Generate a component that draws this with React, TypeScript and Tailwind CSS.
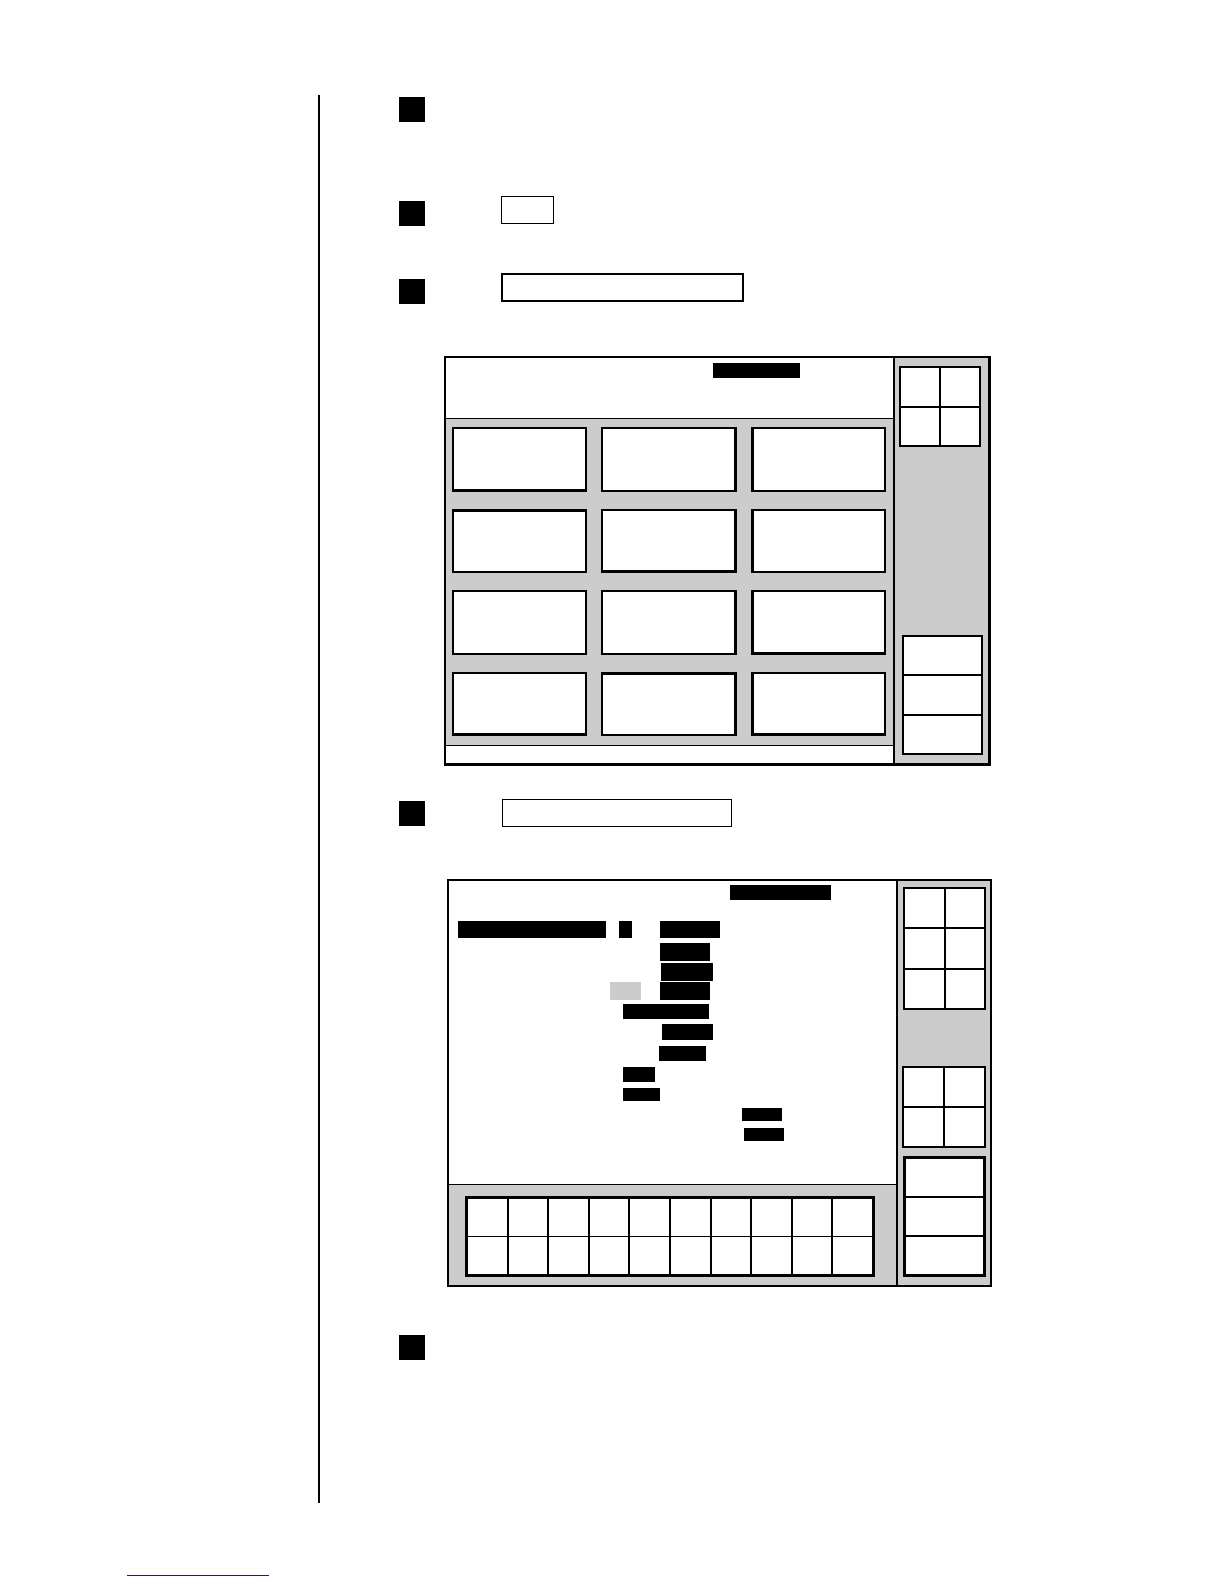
const Square = ({ className = "" }: { className?: string }) => (
  <div className={"h-[25px] w-[26px] shrink-0 bg-black " + className} />
);

// grid of white keys separated by black lines (gap trick)
function KeyGrid({ cells, className }: { cells: number; className: string }) {
  return (
    <div className={className}>
      {Array.from({ length: cells }).map((_, i) => (
        <div key={i} className="bg-white" />
      ))}
    </div>
  );
}

const cardClasses = [
  "border-2 border-b-[3px]",
  "border-2 border-r-[3px]",
  "border-2 border-l-[3px]",
  "border-2 border-t-[3px]",
  "border-2 border-b-[3px] border-r-[3px]",
  "border-2 border-l-[3px]",
  "border-2",
  "border-2 border-r-[3px]",
  "border-2 border-b-[3px] border-l-[3px]",
  "border-2 border-b-[3px]",
  "border-2 border-t-[3px] border-r-[3px]",
  "border-2 border-l-[3px] border-b-[3px]",
];

function MenuScreen() {
  return (
    <div className="ml-[45px] mt-[52px] flex h-[410px] w-[547px] border-2 border-r-[3px] border-b-[3px] border-black">
      <div className="flex w-[449px] flex-col border-r-2 border-black">
        <div className="h-[61px] border-b border-black bg-white pl-[267px] pt-[5px]">
          <div className="h-[15px] w-[87px] bg-black" />
        </div>
        <div className="grid flex-1 grid-cols-3 grid-rows-4 gap-x-[14px] gap-y-[17px] border-b border-black bg-[#cccccc] pb-[9px] pl-[6px] pr-[7px] pt-[8px]">
          {cardClasses.map((c, i) => (
            <div key={i} className={"border-black bg-white " + c} />
          ))}
        </div>
        <div className="h-[17px] bg-white" />
      </div>
      <div className="flex flex-1 flex-col justify-between bg-[#cccccc] py-[8px]">
        <KeyGrid
          cells={4}
          className="ml-[4px] grid h-[81px] w-[82px] grid-cols-2 grid-rows-2 gap-[2px] border-2 border-black bg-black"
        />
        <div className="ml-[7px] flex h-[120px] w-[81px] flex-col gap-[2px] border-2 border-black bg-black">
          <div className="flex-1 bg-white" />
          <div className="flex-1 bg-white" />
          <div className="flex-1 bg-white" />
        </div>
      </div>
    </div>
  );
}

function EditScreen() {
  return (
    <div className="ml-[48px] mt-[52px] flex h-[408px] w-[545px] border-2 border-black">
      <div className="flex w-[449px] flex-col border-r-2 border-black">
        <div className="h-[304px] border-b border-black bg-white">
          <div className="ml-[281px] mt-[4px] h-[15px] w-[101px] bg-black" />
          <div className="mt-[21px] flex h-[17px]">
            <div className="ml-[9px] w-[148px] bg-black" />
            <div className="ml-[13px] w-[13px] bg-black" />
            <div className="ml-[28px] w-[60px] bg-black" />
          </div>
          <div className="mt-[5px] flex h-[18px]">
            <div className="ml-[211px] w-[50px] bg-black" />
          </div>
          <div className="mt-[2px] flex h-[18px]">
            <div className="ml-[212px] w-[52px] bg-black" />
          </div>
          <div className="mt-px flex h-[18px]">
            <div className="ml-[161px] w-[31px] bg-[#cccccc]" />
            <div className="ml-[19px] w-[50px] bg-black" />
          </div>
          <div className="mt-[4px] flex h-[15px]">
            <div className="ml-[174px] w-[86px] bg-black" />
          </div>
          <div className="mt-[5px] flex h-[16px]">
            <div className="ml-[213px] w-[51px] bg-black" />
          </div>
          <div className="mt-[6px] flex h-[15px]">
            <div className="ml-[210px] w-[47px] bg-black" />
          </div>
          <div className="mt-[6px] flex h-[15px]">
            <div className="ml-[174px] w-[32px] bg-black" />
          </div>
          <div className="mt-[6px] flex h-[13px]">
            <div className="ml-[174px] w-[37px] bg-black" />
          </div>
          <div className="mt-[7px] flex h-[13px]">
            <div className="ml-[293px] w-[40px] bg-black" />
          </div>
          <div className="mt-[7px] flex h-[13px]">
            <div className="ml-[295px] w-[40px] bg-black" />
          </div>
        </div>
        <div className="flex-1 bg-[#cccccc] pl-[16px] pt-[11px]">
          <KeyGrid
            cells={20}
            className="grid h-[81px] w-[410px] grid-cols-10 grid-rows-2 gap-x-[2px] gap-y-px border-[3px] border-black bg-black"
          />
        </div>
      </div>
      <div className="flex-1 bg-[#cccccc] pt-[6px]">
        <KeyGrid
          cells={6}
          className="ml-[5px] grid h-[123px] w-[83px] grid-cols-2 grid-rows-3 gap-[2px] border-2 border-black bg-black"
        />
        <KeyGrid
          cells={4}
          className="ml-[4px] mt-[56px] grid h-[82px] w-[84px] grid-cols-2 grid-rows-2 gap-[2px] border-2 border-black bg-black"
        />
        <div className="ml-[5px] mt-[8px] flex h-[121px] w-[83px] flex-col gap-[2px] border-[3px] border-black bg-black">
          <div className="flex-1 bg-white" />
          <div className="flex-1 bg-white" />
          <div className="flex-1 bg-white" />
        </div>
      </div>
    </div>
  );
}

export default function App() {
  return (
    <div className="h-[1584px] w-[1224px] overflow-hidden bg-white font-['Liberation_Sans',sans-serif]">
      <div className="flex pt-[95px]">
        <div className="w-[318px] shrink-0" />
        <div className="h-[1408px] border-l-2 border-black pl-[79px] pt-[2px]">
          <Square />

          <div className="mt-[74px] flex items-start">
            <Square className="mt-[5px]" />
            <div className="ml-[76px] h-[28px] w-[53px] border-[1.5px] border-black" />
          </div>

          <div className="mt-[47px] flex items-start">
            <Square className="mt-[6px]" />
            <div className="ml-[76px] h-[29px] w-[243px] border-2 border-black" />
          </div>

          <MenuScreen />

          <div className="mt-[33px] flex items-start">
            <Square className="mt-[2px]" />
            <div className="ml-[77px] h-[28px] w-[230px] border border-black" />
          </div>

          <EditScreen />

          <Square className="mt-[48px]" />
        </div>
      </div>
      <div className="ml-[127px] mt-[72px] h-px w-[142px] bg-[#1a1a8c]" />
    </div>
  );
}
